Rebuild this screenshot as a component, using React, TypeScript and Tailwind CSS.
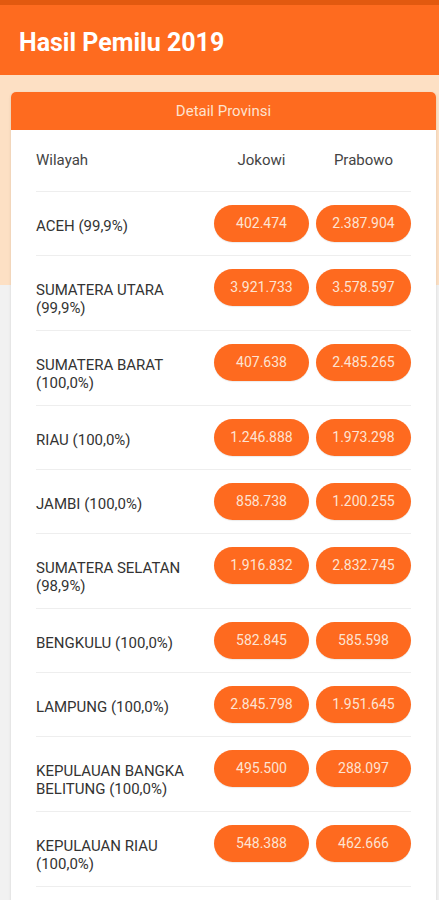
const rows = [
  { name: "ACEH (99,9%)", jokowi: "402.474", prabowo: "2.387.904" },
  { name: "SUMATERA UTARA (99,9%)", jokowi: "3.921.733", prabowo: "3.578.597" },
  { name: "SUMATERA BARAT (100,0%)", jokowi: "407.638", prabowo: "2.485.265" },
  { name: "RIAU (100,0%)", jokowi: "1.246.888", prabowo: "1.973.298" },
  { name: "JAMBI (100,0%)", jokowi: "858.738", prabowo: "1.200.255" },
  { name: "SUMATERA SELATAN (98,9%)", jokowi: "1.916.832", prabowo: "2.832.745" },
  { name: "BENGKULU (100,0%)", jokowi: "582.845", prabowo: "585.598" },
  { name: "LAMPUNG (100,0%)", jokowi: "2.845.798", prabowo: "1.951.645" },
  { name: "KEPULAUAN BANGKA BELITUNG (100,0%)", jokowi: "495.500", prabowo: "288.097" },
  { name: "KEPULAUAN RIAU (100,0%)", jokowi: "548.388", prabowo: "462.666" },
]

function Pill({ value }: { value: string }) {
  return (
    <div className="w-[95px] h-[37px] rounded-full bg-[#fe6a1f] flex items-center justify-center text-[14px] text-[#fde3d2] shadow-[0_1px_1px_rgba(0,0,0,0.08)]">
      {value}
    </div>
  )
}

export default function App() {
  return (
    <div className="h-[900px] overflow-hidden bg-[#f1f1f1] font-['Roboto',sans-serif]">
      {/* status bar */}
      <div className="h-[5px] bg-[#e2590f]" />

      {/* app bar */}
      <header className="h-[70px] bg-[#fe6b1f] flex items-center px-[19px] pt-[5px]">
        <h1 className="text-[25px] font-bold text-white">Hasil Pemilu 2019</h1>
      </header>

      <main className="pt-[17px] pl-[11px] pr-[3px] bg-[linear-gradient(to_bottom,#fde0c4_210px,#f1f1f1_210px)]">
        <div className="rounded-[5px] overflow-hidden bg-white shadow-[0_1px_3px_rgba(0,0,0,0.12)]">
          <div className="h-[38px] bg-[#fe6b1f] flex items-center justify-center text-[15px] text-[#fde2cf]">
            Detail Provinsi
          </div>

          <div className="px-[25px] pb-[40px]">
            {/* column headings */}
            <div className="h-[62px] flex items-center border-b border-[#eeeeee] text-[15px] text-[#444]">
              <div className="flex-1">Wilayah</div>
              <div className="w-[95px] text-center">Jokowi</div>
              <div className="w-[95px] ml-[7px] text-center">Prabowo</div>
            </div>

            {rows.map((r) => (
              <div key={r.name} className="flex items-start py-[13px] border-b border-[#eeeeee]">
                <div className="flex-1 mt-[12px] text-[15px] leading-[18px] text-[#333] max-w-[172px]">
                  {r.name}
                </div>
                <div className="ml-auto flex gap-[7px]">
                  <Pill value={r.jokowi} />
                  <Pill value={r.prabowo} />
                </div>
              </div>
            ))}
          </div>
        </div>
      </main>
    </div>
  )
}
